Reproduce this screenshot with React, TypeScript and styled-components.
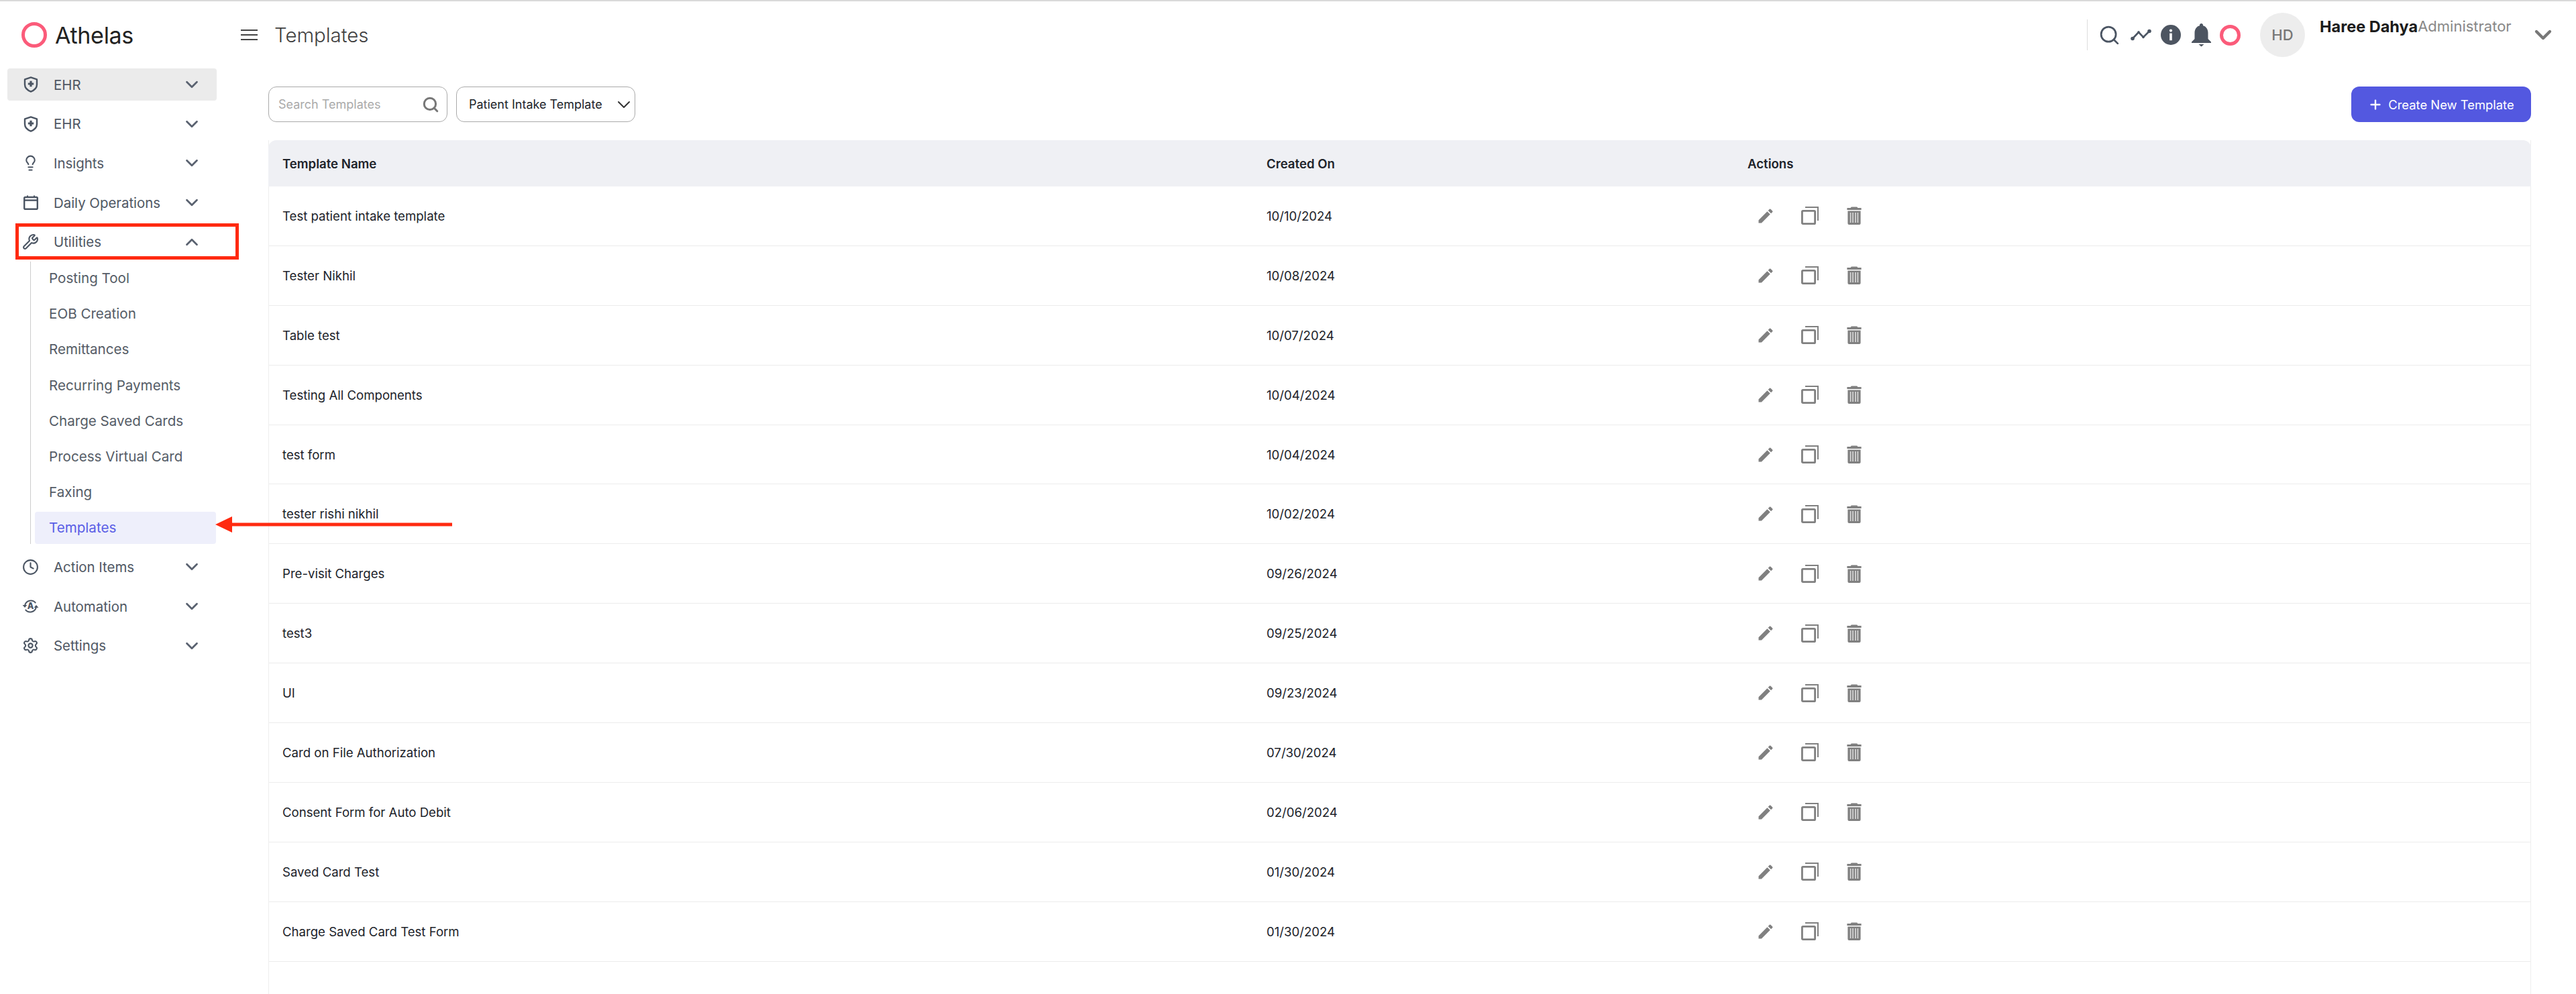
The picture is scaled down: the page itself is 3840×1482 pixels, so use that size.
import { FC, ReactNode } from "react";
import styled, { createGlobalStyle } from "styled-components";
import { ChevronDown, ChevronUp, Clock, Lightbulb, Plus, Search, Settings, Wrench } from "lucide-react";

const colors = {
  text: "#20232a",
  nav: "#4f5763",
  icon: "#4b5563",
  border: "#ececec",
  action: "#808080",
  primary: "#5358e0",
  pink: "#fb5b7a",
  red: "#ff2a10",
};

const ShieldIcon = () => (
  <svg width="22" height="24" viewBox="0 0 22 24" fill="none">
    <path
      d="M11 1.4 L20 4.4 V12 C20 17 16 20.6 11 22.6 C6 20.6 2 17 2 12 V4.4 Z"
      stroke={colors.icon}
      strokeWidth="2.4"
      strokeLinejoin="round"
    />
    <path d="M11 6.8 V15.2 M6.8 11 H15.2" stroke={colors.icon} strokeWidth="3.2" />
  </svg>
);

const CalendarIcon = () => (
  <svg width="22" height="22" viewBox="0 0 22 22" fill="none">
    <rect x="1.2" y="3" width="19.6" height="17.8" rx="1.6" stroke={colors.icon} strokeWidth="2.4" />
    <path d="M1.2 7.6 H20.8" stroke={colors.icon} strokeWidth="2.4" />
    <path d="M6 0.6 V3 M16 0.6 V3" stroke={colors.icon} strokeWidth="2" />
  </svg>
);

const AutomationIcon = () => (
  <svg width="26" height="24" viewBox="0 0 26 24" fill="none">
    <path d="M4.2 11 A9.4 9.4 0 0 1 21 7" stroke={colors.icon} strokeWidth="2" />
    <path d="M21.8 13 A9.4 9.4 0 0 1 5 17" stroke={colors.icon} strokeWidth="2" />
    <path d="M0.6 10 H7.6 L4.2 14 Z" fill={colors.icon} />
    <path d="M25.4 14 H18.4 L21.8 10 Z" fill={colors.icon} />
    <text x="13" y="16.6" textAnchor="middle" fontFamily="Inter, sans-serif" fontSize="13" fontWeight="800" fill={colors.icon}>
      A
    </text>
  </svg>
);

const TrendIcon = () => (
  <svg width="31" height="18" viewBox="0 0 31 18" fill="none">
    <path d="M3 14.5 L12 5 L19 12.5 L28 3.5" stroke={colors.icon} strokeWidth="2.6" />
    <circle cx="3" cy="14.5" r="2.8" fill={colors.icon} />
    <circle cx="12" cy="5" r="1.8" fill={colors.icon} />
    <circle cx="19" cy="12.5" r="1.8" fill={colors.icon} />
    <circle cx="28" cy="3.5" r="2.8" fill={colors.icon} />
  </svg>
);

const InfoIcon = () => (
  <svg width="30" height="30" viewBox="0 0 30 30">
    <circle cx="15" cy="15" r="15" fill="#4d5561" />
    <circle cx="15" cy="8.6" r="2.1" fill="#fff" />
    <rect x="13.2" y="12.6" width="3.6" height="10.6" fill="#fff" />
  </svg>
);

const BellIcon = () => (
  <svg width="31" height="36" viewBox="0 0 30 36">
    <path
      d="M15 1 a2.6 2.6 0 0 1 2.5 3.2 C22 5.2 25 9.5 25 15 V24 L29.5 28.4 V30 H0.5 V28.4 L5 24 V15 C5 9.5 8 5.2 12.5 4.2 A2.6 2.6 0 0 1 15 1 Z M11 32 H19 L15 35.6 Z"
      fill="#4d5561"
    />
  </svg>
);

const MenuIcon = () => (
  <svg width="25" height="16" viewBox="0 0 25 16">
    <path d="M0 1 H25 M0 8 H25 M0 15 H25" stroke="#444" strokeWidth="2" />
  </svg>
);

const PencilIcon = () => (
  <svg width="28" height="28" viewBox="0 0 24 24">
    <path
      d="M3 17.25V21h3.75L17.81 9.94l-3.75-3.75L3 17.25zM20.71 7.04a.996.996 0 0 0 0-1.41l-2.34-2.34a.996.996 0 0 0-1.41 0l-1.83 1.83 3.75 3.75 1.83-1.83z"
      fill={colors.action}
    />
  </svg>
);

const CopyIcon = () => (
  <svg width="26" height="27" viewBox="0 0 26 27" fill="none">
    <rect x="1.4" y="6.4" width="19.2" height="19.2" rx="1.2" stroke={colors.action} strokeWidth="2.8" />
    <path d="M6 1 H25 V21" stroke={colors.action} strokeWidth="2" />
  </svg>
);

const TrashIcon = () => (
  <svg width="22" height="27" viewBox="0 0 22 27">
    <path d="M6 1.6 Q6 0.4 7.5 0.4 H14.5 Q16 0.4 16 1.6 L16.4 2 H21.6 V5 H0.4 V2 H5.6 Z" fill={colors.action} />
    <path d="M1.4 6.4 H20.6 V25 Q20.6 27 18.6 27 H3.4 Q1.4 27 1.4 25 Z" fill={colors.action} />
    <path d="M5.6 9 V24 M9.1 9 V24 M12.9 9 V24 M16.4 9 V24" stroke="#ddd" strokeWidth="1.6" />
  </svg>
);

type NavEntry = { label: string; icon: ReactNode; open?: boolean; selected?: boolean };

const topNav: NavEntry[] = [
  { label: "EHR", icon: <ShieldIcon />, selected: true },
  { label: "EHR", icon: <ShieldIcon /> },
  { label: "Insights", icon: <Lightbulb size={28} strokeWidth={2} /> },
  { label: "Daily Operations", icon: <CalendarIcon /> },
  { label: "Utilities", icon: <Wrench size={25} strokeWidth={2} />, open: true },
];

const subNav = [
  "Posting Tool",
  "EOB Creation",
  "Remittances",
  "Recurring Payments",
  "Charge Saved Cards",
  "Process Virtual Card",
  "Faxing",
  "Templates",
];

const bottomNav: NavEntry[] = [
  { label: "Action Items", icon: <Clock size={27} strokeWidth={2} /> },
  { label: "Automation", icon: <AutomationIcon /> },
  { label: "Settings", icon: <Settings size={27} strokeWidth={2} /> },
];

const templates = [
  ["Test patient intake template", "10/10/2024"],
  ["Tester Nikhil", "10/08/2024"],
  ["Table test", "10/07/2024"],
  ["Testing All Components", "10/04/2024"],
  ["test form", "10/04/2024"],
  ["tester rishi nikhil", "10/02/2024"],
  ["Pre-visit Charges", "09/26/2024"],
  ["test3", "09/25/2024"],
  ["UI", "09/23/2024"],
  ["Card on File Authorization", "07/30/2024"],
  ["Consent Form for Auto Debit", "02/06/2024"],
  ["Saved Card Test", "01/30/2024"],
  ["Charge Saved Card Test Form", "01/30/2024"],
];

const NavRow: FC<{ entry: NavEntry }> = ({ entry }) => (
  <NavItem $selected={entry.selected}>
    <NavIcon>{entry.icon}</NavIcon>
    <NavLabel>{entry.label}</NavLabel>
    <NavChevron>{entry.open ? <ChevronUp size={30} strokeWidth={2.2} /> : <ChevronDown size={30} strokeWidth={2.2} />}</NavChevron>
  </NavItem>
);

const App = () => (
  <Page>
    <GlobalStyle />
    <TopLine />
    <TopBar>
      <Brand>
        <Ring $size={38} />
        <BrandName>Athelas</BrandName>
      </Brand>
      <MenuButton>
        <MenuIcon />
      </MenuButton>
      <PageTitle>Templates</PageTitle>
      <TopRight>
        <Divider />
        <IconSlot $left={16}>
          <Search size={33} strokeWidth={2} color={colors.icon} />
        </IconSlot>
        <IconSlot $left={15}>
          <TrendIcon />
        </IconSlot>
        <IconSlot $left={14}>
          <InfoIcon />
        </IconSlot>
        <IconSlot $left={15}>
          <BellIcon />
        </IconSlot>
        <IconSlot $left={12}>
          <Ring $size={31} />
        </IconSlot>
        <Avatar>HD</Avatar>
        <UserBlock>
          <UserName>Haree Dahya</UserName>
          <UserRole>Administrator</UserRole>
        </UserBlock>
        <UserChevron>
          <ChevronDown size={40} strokeWidth={2.6} />
        </UserChevron>
      </TopRight>
    </TopBar>
    <Body>
      <Sidebar>
        {topNav.map((entry, index) => (
          <NavRow entry={entry} key={index} />
        ))}
        <SubList>
          {subNav.map((label) => (
            <SubItem key={label} $active={label === "Templates"}>
              {label}
            </SubItem>
          ))}
        </SubList>
        {bottomNav.map((entry) => (
          <NavRow entry={entry} key={entry.label} />
        ))}
      </Sidebar>
      <Main>
        <Toolbar>
          <Filters>
            <SearchField>
              <SearchInput placeholder="Search Templates" />
              <Search size={26} strokeWidth={2.8} color="#777" />
            </SearchField>
            <SelectField>
              <span>Patient Intake Template</span>
              <ChevronDown size={32} strokeWidth={1.5} color="#333" />
            </SelectField>
          </Filters>
          <CreateButton>
            <Plus size={22} strokeWidth={2.6} />
            Create New Template
          </CreateButton>
        </Toolbar>
        <TableBox>
          <HeaderRow>
            <span>Template Name</span>
            <span>Created On</span>
            <span>Actions</span>
          </HeaderRow>
          {templates.map(([name, date], index) => (
            <Row key={index}>
              <span>{name}</span>
              <span>{date}</span>
              <Actions>
                <PencilIcon />
                <IconSlot $left={39.5}>
                  <CopyIcon />
                </IconSlot>
                <IconSlot $left={42}>
                  <TrashIcon />
                </IconSlot>
              </Actions>
            </Row>
          ))}
        </TableBox>
      </Main>
    </Body>
    <RedBox />
    <Arrow width="353" height="24" viewBox="0 0 353 24">
      <path d="M0 12 L25 0 V9.5 H353 V14.5 H25 V24 Z" fill={colors.red} />
    </Arrow>
  </Page>
);
export default App;

const GlobalStyle = createGlobalStyle`
  html, body {
    margin: 0;
    padding: 0;
    background: #fff;
  }
  * {
    box-sizing: border-box;
  }
`;

const Page = styled.div`
  position: relative;
  display: flex;
  flex-direction: column;
  width: 3840px;
  height: 1482px;
  overflow: hidden;
  background: #fff;
  color: ${colors.text};
  font-family: Inter, "Liberation Sans", sans-serif;
`;
const TopLine = styled.div`
  height: 2px;
  background: #d9d9d9;
`;
const TopBar = styled.header`
  display: flex;
  align-items: center;
  height: 100px;
  padding-left: 32px;
`;
const Brand = styled.div`
  display: flex;
  align-items: center;
  column-gap: 12px;
  width: 327px;
`;
const Ring = styled.span<{ $size: number }>`
  display: block;
  width: ${(p) => p.$size}px;
  height: ${(p) => p.$size}px;
  border: 5px solid ${colors.pink};
  border-radius: 50%;
`;
const BrandName = styled.span`
  font-size: 34px;
  color: #222;
  letter-spacing: -0.3px;
`;
const MenuButton = styled.div`
  display: flex;
  width: 50px;
`;
const PageTitle = styled.h1`
  margin: 0;
  font-size: 29.4px;
  font-weight: 300;
  color: #3f3f3f;
`;
const TopRight = styled.div`
  display: flex;
  align-items: center;
  margin-left: auto;
  padding-right: 29px;
`;
const Divider = styled.div`
  width: 1px;
  height: 46px;
  background: #ddd;
`;
const IconSlot = styled.div<{ $left: number }>`
  display: flex;
  margin-left: ${(p) => p.$left}px;
`;
const Avatar = styled.div`
  display: flex;
  align-items: center;
  justify-content: center;
  width: 67px;
  height: 66px;
  margin-left: 29px;
  border-radius: 50%;
  background: #ededed;
  color: #777;
  font-size: 22px;
  font-weight: 500;
`;
const UserBlock = styled.div`
  display: flex;
  align-items: center;
  align-self: flex-start;
  width: 288px;
  height: 24px;
  margin: 8px 0 0 22px;
  white-space: nowrap;
`;
const UserName = styled.span`
  font-size: 23.5px;
  font-weight: 700;
  color: #1c1c1c;
`;
const UserRole = styled.span`
  font-size: 22px;
  color: #888;
`;
const UserChevron = styled.div`
  display: flex;
  margin-left: 25px;
  color: #777;
`;
const Body = styled.div`
  display: flex;
  flex: 1;
  min-height: 0;
`;
const Sidebar = styled.nav`
  display: flex;
  flex-direction: column;
  row-gap: 10.7px;
  flex: none;
  width: 400px;
  padding-left: 11px;
`;
const NavItem = styled.div<{ $selected?: boolean }>`
  display: flex;
  align-items: center;
  width: 312px;
  height: 48px;
  padding: 0 22px;
  border-radius: 4px;
  background: ${(p) => (p.$selected ? "#ebebeb" : "transparent")};
  color: ${colors.icon};
`;
const NavIcon = styled.span`
  display: flex;
  justify-content: center;
  flex: none;
  width: 25px;
  margin-right: 22px;
`;
const NavLabel = styled.span`
  font-size: 20.4px;
  color: ${colors.nav};
`;
const NavChevron = styled.span`
  display: flex;
  margin-left: auto;
  color: #5a6270;
`;
const SubList = styled.div`
  display: flex;
  flex-direction: column;
  row-gap: 5.2px;
  width: 277px;
  margin: -5px 0 0 34px;
  padding-left: 6px;
  border-left: 1px solid #ccc;
`;
const SubItem = styled.div<{ $active?: boolean }>`
  display: flex;
  align-items: center;
  height: 48px;
  padding-left: 21px;
  border-radius: 4px;
  background: ${(p) => (p.$active ? "#eeeffb" : "transparent")};
  color: ${(p) => (p.$active ? "#5a5ee6" : "#555c66")};
  font-size: 20.6px;
`;
const Main = styled.main`
  display: flex;
  flex-direction: column;
  row-gap: 27px;
  flex: 1;
  min-width: 0;
  padding: 27px 67px 0 0;
`;
const Toolbar = styled.div`
  display: flex;
  justify-content: space-between;
`;
const Filters = styled.div`
  display: flex;
  column-gap: 13px;
`;
const SearchField = styled.label`
  display: flex;
  align-items: center;
  width: 267px;
  height: 53px;
  padding: 0 11px 0 14px;
  border: 1px solid #aaa;
  border-radius: 12px;
`;
const SearchInput = styled.input`
  flex: 1;
  min-width: 0;
  padding: 0;
  border: 0;
  outline: 0;
  font-family: inherit;
  font-size: 18px;
  color: ${colors.text};
  &::placeholder {
    color: #aaa;
    opacity: 1;
  }
`;
const SelectField = styled.div`
  display: flex;
  align-items: center;
  justify-content: space-between;
  width: 267px;
  height: 53px;
  padding: 0 0 0 18px;
  border: 1px solid #aaa;
  border-radius: 12px;
  font-size: 18px;
  white-space: nowrap;
`;
const CreateButton = styled.button`
  display: flex;
  align-items: center;
  justify-content: center;
  column-gap: 8px;
  width: 268px;
  height: 53px;
  padding: 0;
  border: 0;
  border-radius: 12px;
  background: ${colors.primary};
  color: #fff;
  font-family: inherit;
  font-size: 18.4px;
`;
const TableBox = styled.section`
  flex: 1;
  border-right: 1px solid #eee;
  border-left: 1px solid #eee;
  font-size: 18.6px;
`;
const HeaderRow = styled.div`
  display: grid;
  grid-template-columns: 1467px 717px 1fr;
  align-items: center;
  height: 69px;
  margin: 0 -1px;
  padding-left: 21px;
  border-radius: 12px 12px 0 0;
  background: #eff0f4;
  font-weight: 600;
`;
const Row = styled.div`
  display: grid;
  grid-template-columns: 1467px 717px 1fr;
  align-items: center;
  height: 88.9px;
  padding-left: 20px;
  border-bottom: 1px solid ${colors.border};
`;
const Actions = styled.div`
  display: flex;
  align-items: center;
  padding-left: 12.5px;
`;
const RedBox = styled.div`
  position: absolute;
  top: 333px;
  left: 23px;
  width: 333px;
  height: 54px;
  border: 5px solid ${colors.red};
`;
const Arrow = styled.svg`
  position: absolute;
  top: 770px;
  left: 321px;
`;
